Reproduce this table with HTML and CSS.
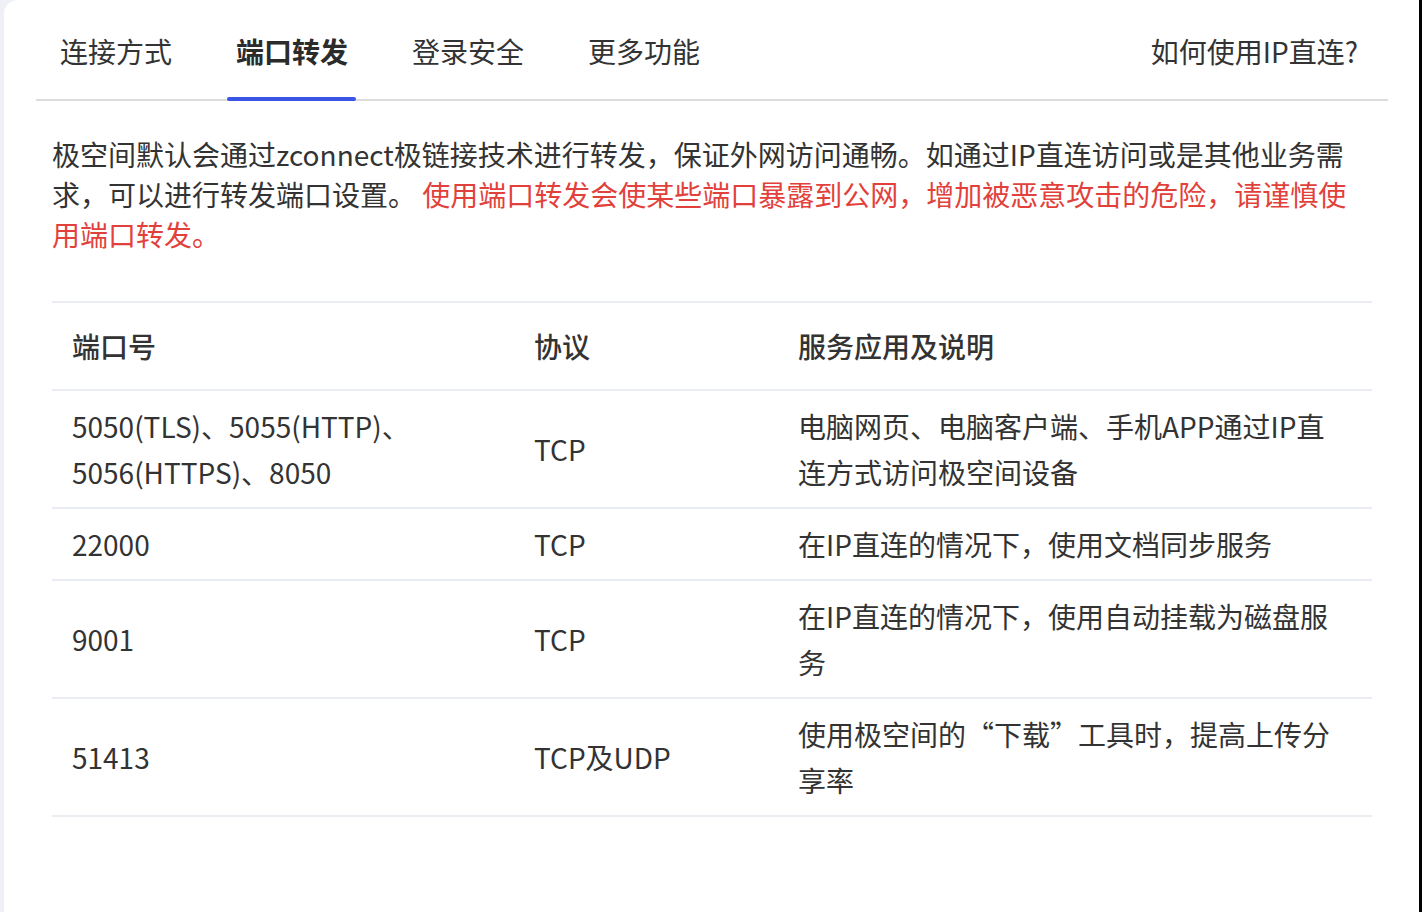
FILE: index.html
```html
<!DOCTYPE html>
<html lang="zh-CN">
<head>
<meta charset="utf-8">
<title>端口转发</title>
<link rel="stylesheet" href="styles.css">
</head>
<body>
<div class="page">
  <div class="card">
    <nav class="tabs">
      <div class="tab-list">
        <span class="tab">连接方式</span>
        <span class="tab active">端口转发</span>
        <span class="tab">登录安全</span>
        <span class="tab">更多功能</span>
      </div>
      <a class="help">如何使用IP直连?</a>
    </nav>
    <div class="content">
      <p class="intro">极空间默认会通过zconnect极链接技术进行转发，保证外网访问通畅。如通过IP直连访问或是其他业务需求，可以进行转发端口设置。 <span class="warn">使用端口转发会使某些端口暴露到公网，增加被恶意攻击的危险，请谨慎使用端口转发。</span></p>
      <table class="ports">
        <colgroup>
          <col class="c1"><col class="c2"><col class="c3">
        </colgroup>
        <thead>
          <tr><th>端口号</th><th>协议</th><th>服务应用及说明</th></tr>
        </thead>
        <tbody>
          <tr><td>5050(TLS)、5055(HTTP)、5056(HTTPS)、8050</td><td>TCP</td><td>电脑网页、电脑客户端、手机APP通过IP直连方式访问极空间设备</td></tr>
          <tr><td>22000</td><td>TCP</td><td>在IP直连的情况下，使用文档同步服务</td></tr>
          <tr><td>9001</td><td>TCP</td><td>在IP直连的情况下，使用自动挂载为磁盘服务</td></tr>
          <tr><td>51413</td><td>TCP及UDP</td><td>使用极空间的“下载”工具时，提高上传分享率</td></tr>
        </tbody>
      </table>
    </div>
  </div>
  <div class="edge"></div>
</div>
</body>
</html>
```
FILE: styles.css
```css
* { box-sizing: border-box; }
html, body { margin: 0; padding: 0; }
body {
  background: #eef0f6;
  font-family: "Noto Sans CJK SC", "Noto Sans", sans-serif;
  color: #333333;
}
.page {
  display: flex;
  height: 912px;
  overflow: hidden;
}
.card {
  width: 1415px;
  margin-left: 4px;
  background: #ffffff;
  border-top-left-radius: 14px;
  padding: 0 31px 0 32px;
}
.edge {
  flex: 1;
  background: #000000;
}
.tabs {
  display: flex;
  align-items: center;
  height: 101px;
  border-bottom: 2px solid #dcdcdc;
  padding: 2px 30px 0 24px;
}
.tab-list {
  display: flex;
  gap: 64px;
  height: 100%;
  align-items: center;
}
.tab {
  position: relative;
  font-size: 28px;
  line-height: 40px;
  color: #333333;
  height: 97px;
  display: flex;
  align-items: center;
}
.tab.active {
  font-weight: 700;
  color: #2b2b2b;
}
.tab.active::after {
  content: "";
  position: absolute;
  left: -9px;
  right: -8px;
  bottom: -2px;
  height: 4px;
  border-radius: 2px;
  background: #3a55e6;
}
.help {
  margin-left: auto;
  font-size: 28px;
  line-height: 40px;
  color: #333333;
}
.content {
  padding: 0 16px;
}
.intro {
  margin: 33px 10px 47px 0;
  font-size: 28px;
  line-height: 40px;
  color: #333333;
}
.warn { color: #e2413b; }
.ports {
  width: 100%;
  border-collapse: collapse;
  table-layout: fixed;
  font-size: 28px;
  line-height: 46px;
}
.c1 { width: 462px; }
.c2 { width: 264px; }
.ports th, .ports td {
  text-align: left;
  vertical-align: middle;
  border-top: 2px solid #e9ecf1;
  border-bottom: 2px solid #e9ecf1;
  padding: 12px 30px 12px 20px;
}
.ports th {
  font-weight: 500;
  padding-top: 20px;
  padding-bottom: 20px;
}
```
